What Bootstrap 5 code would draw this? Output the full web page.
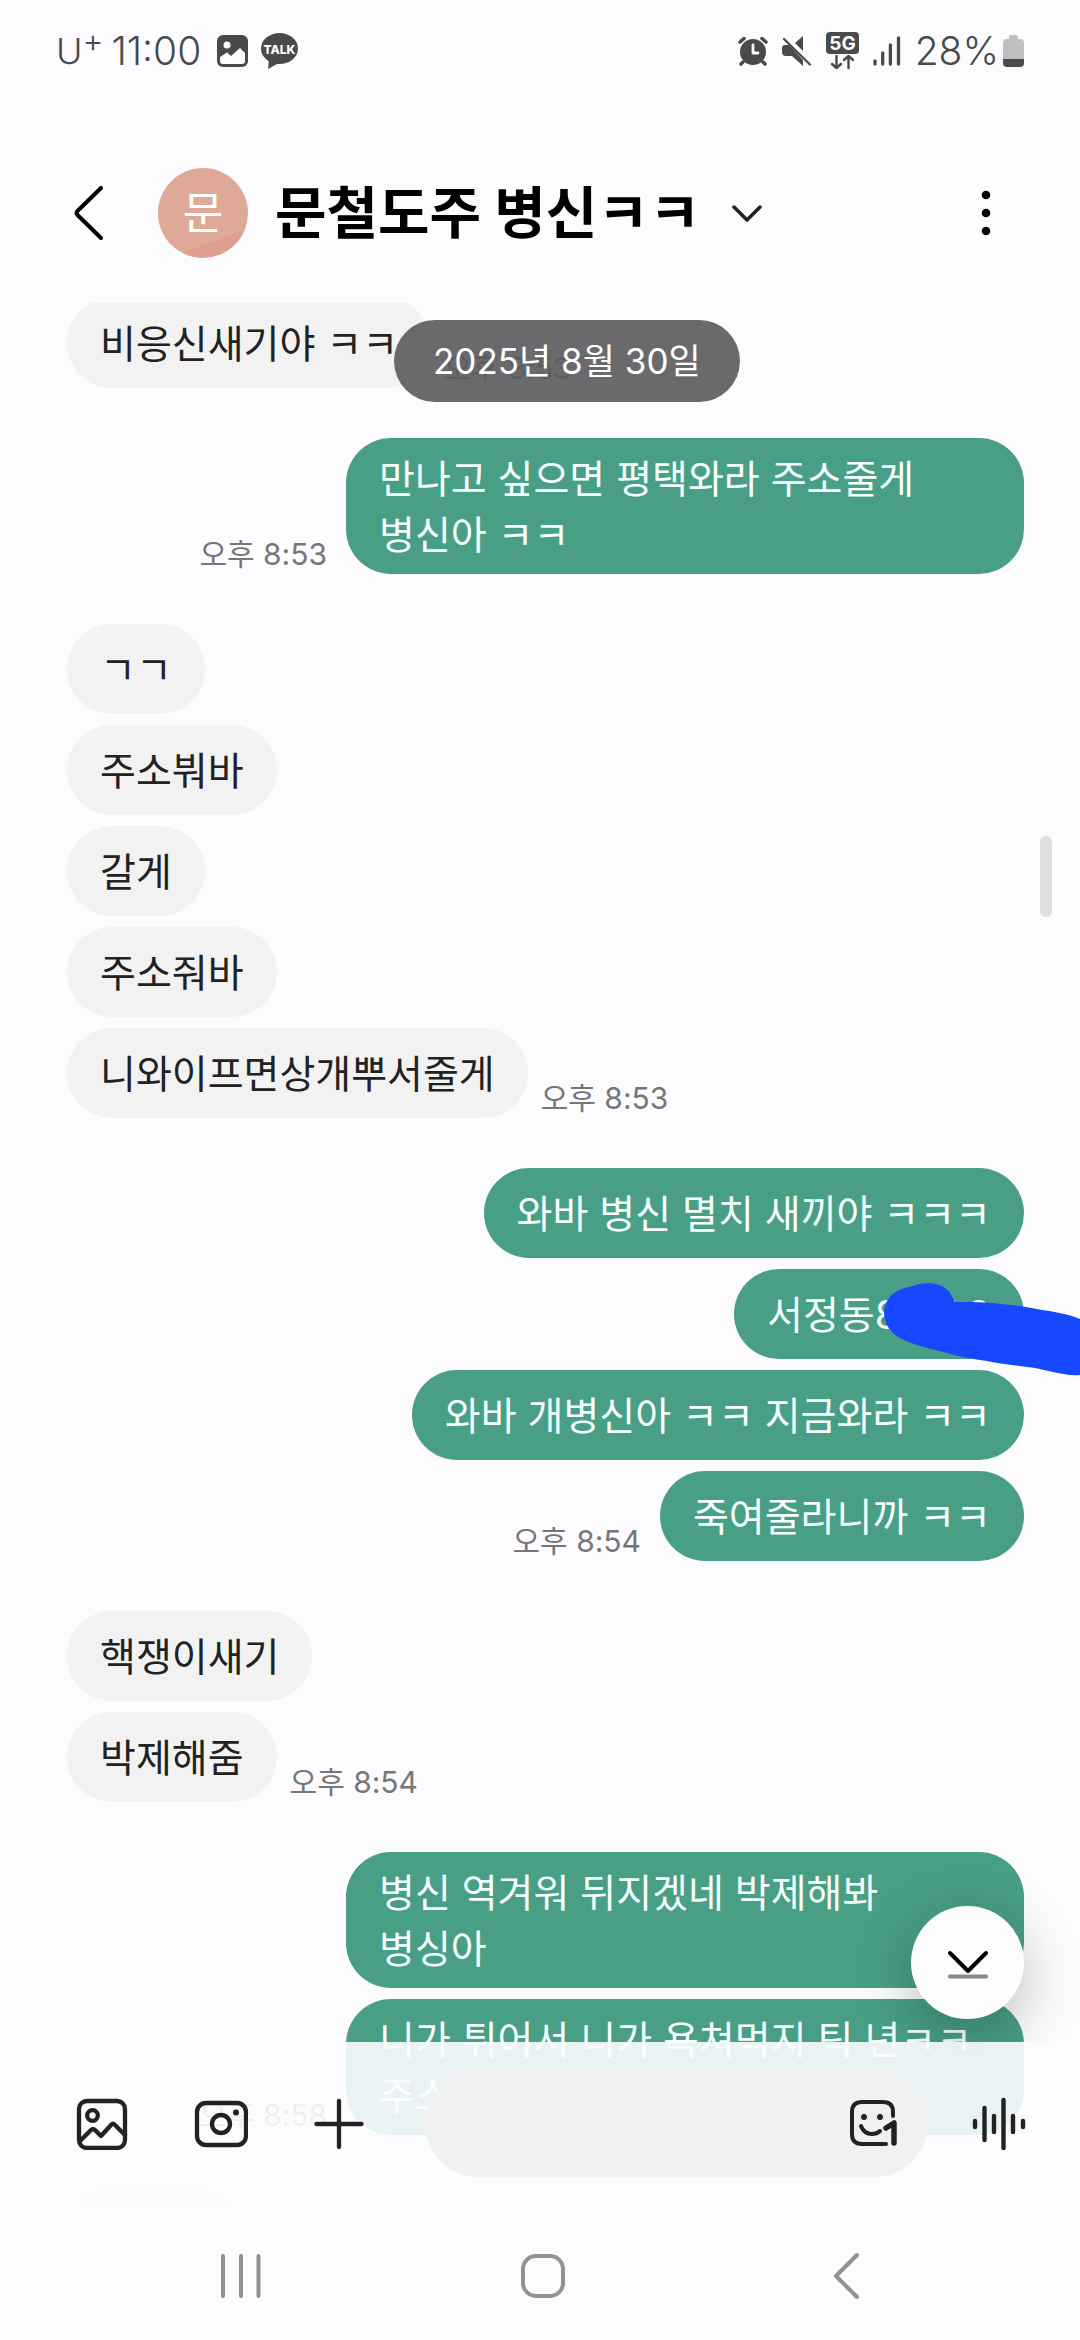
<!DOCTYPE html>
<html lang="ko">
<head>
<meta charset="utf-8">
<meta name="viewport" content="width=device-width, initial-scale=1">
<title>메시지</title>
<link href="https://cdn.jsdelivr.net/npm/bootstrap@5.3.0/dist/css/bootstrap.min.css" rel="stylesheet">
<style>
  :root { --page: #fcfcff; --mine: #489f86; --theirs: #f2f2f2; --ink: #222; --status: #4a4a4a; --soft: #767676; }
  body { font-family: Inter, "Noto Sans CJK KR", sans-serif; background: var(--page); color: var(--ink); }
  .app-shell { height: 100vh; min-height: 900px; }
  svg { display: block; flex: none; fill: none; stroke-linecap: round; stroke-linejoin: round; }
  .btn { --bs-btn-padding-x: 0; --bs-btn-padding-y: 0; --bs-btn-border-width: 0; }

  .status-bar { height: 102px; padding: 0 56px; color: var(--status); font-size: 39px; font-weight: 300; line-height: 56px; }
  .carrier { font-size: 36px; }
  .carrier sup { font-size: 32px; top: -12px; line-height: 0; }
  .status-right { gap: 14px; }

  .chat-header { height: 201px; padding: 20px 87px 0 74px; }
  .avatar { width: 90px; height: 90px; font-size: 44px; color: #fff; margin-left: 55px; background: linear-gradient(160deg, #dfa998 0 76%, #df9f90 76%); }
  .chat-title { font-size: 56px; font-weight: 700; line-height: 72px; color: #000; margin-left: 27px; }
  .title-toggle { margin-left: 32px; }

  .chat-view { min-height: 0; }
  .message-list { padding: 0 56px 0 67px; gap: 50px; margin-top: -5px; }
  .message-group { gap: 11px; }
  .bubble { min-height: 90px; padding: 13px 33px 11px; border-radius: 45px; font-size: 39px; line-height: 56px; }
  .bubble-in { background: var(--theirs); }
  .bubble-out { background: var(--mine); color: #f5fffd; }
  .bubble-wide { width: 678px; }
  .bubble-next { width: 172px; }
  .sent-time { font-size: 30px; line-height: 40px; color: var(--soft); white-space: nowrap; }
  .time-in { margin-left: 13px; }
  .time-out { margin-right: 19px; }
  .covered { width: 68px; }

  .date-pill { top: 17px; left: 394px; padding: 13px 39px; border-radius: 41px; background: rgba(90, 90, 92, .9); color: #fff; font-size: 35px; line-height: 56px; white-space: nowrap; }
  .scroll-thumb { top: 533px; right: 28px; width: 12px; height: 81px; border-radius: 6px; background: #dedee0; }
  .marker-stroke { top: 975px; right: 0; }
  .jump-latest { right: 56px; bottom: 186px; width: 113px; height: 113px; background: #fdfdfd; box-shadow: 0 16px 60px rgba(0, 0, 0, .26); }
  .jump-latest:hover { background: #fff; }

  .composer { height: 163px; padding: 0 54px 0 76px; background: rgba(252, 252, 255, .9); }
  .composer-tools { gap: 66px; margin-right: 61px; }
  .composer-box { height: 107px; border-radius: 54px; background: #f1f1f1; margin-right: 44px; padding: 0 29px 0 40px; }
  .composer-box input { background: transparent; font-size: 39px; box-shadow: none; }
  .system-nav { height: 135px; padding: 6px 190px 0 200px; }
</style>
<script src="https://cdn.jsdelivr.net/npm/bootstrap@5.3.0/dist/js/bootstrap.bundle.min.js"></script>
</head>
<body>
<div class="app-shell d-flex flex-column overflow-hidden">

  <div class="status-bar d-flex align-items-center justify-content-between flex-shrink-0">
    <div class="d-flex align-items-center">
      <span class="carrier">U<sup>+</sup></span>
      <span class="ms-2">11:00</span>
      <svg class="ms-3" width="31" height="32" viewBox="0 0 31 32"><rect width="31" height="32" rx="6" fill="#4a4a4a"/><circle cx="10" cy="10" r="3.500" fill="#fcfcff"/><path d="M3 22L10 17.500L14 21L23 13L28 18V26Q28 29 25 29H6Q3 29 3 26Z" fill="#fcfcff"/></svg>
      <svg class="ms-2 ps-1" width="42" height="36" viewBox="-1 0 38 36"><ellipse cx="18.500" cy="15.500" rx="18.500" ry="15.500" fill="#4a4a4a"/><path d="M8 26L7 36L18 30Z" fill="#4a4a4a"/><text x="18.500" y="20.500" text-anchor="middle" font-family="Inter" font-size="12" font-weight="800" fill="#fcfcff">TALK</text></svg>
    </div>
    <div class="status-right d-flex align-items-center">
      <svg width="30" height="30" viewBox="0 0 30 30"><circle cx="15" cy="16" r="13" fill="#4a4a4a"/><path d="M2 6L6 2.500M28 6L24 2.500M5 26L3 28M25 26L27 28" stroke="#4a4a4a" stroke-width="3.500"/><path d="M15 9V17H20" stroke="#fcfcff" stroke-width="2.800"/></svg>
      <svg width="30" height="30" viewBox="0 0 30 30"><path d="M0 12Q0 9 3 9H7L21 24V30L10 20H4Q0 20 0 16ZM13 7L21 0V15Z" fill="#4a4a4a"/><path d="M2 3L28 28.500" stroke="#4a4a4a" stroke-width="2.200"/></svg>
      <svg width="33" height="38" viewBox="0 0 33 38"><rect width="33" height="22" rx="4" fill="#4a4a4a"/><text x="16.500" y="18" text-anchor="middle" font-family="Inter" font-size="19" font-weight="700" fill="#fcfcff">5G</text><path d="M10.500 24V36M6 32L10.500 36L15 32M22.500 36V24M18 28L22.500 24L27 28" stroke="#4a4a4a" stroke-width="2.400"/></svg>
      <svg width="28" height="30" viewBox="0 0 28 30"><path d="M2 25V28M9.700 17V28M17.400 9V28M25.500 2V28" stroke="#4a4a4a" stroke-width="3.300"/></svg>
      <span class="d-flex align-items-center gap-1">28%
        <svg width="21" height="32" viewBox="0 0 21 32"><path d="M6 4V2Q6 0 8 0H13Q15 0 15 2V4H17Q21 4 21 8V25H0V8Q0 4 4 4Z" fill="#bfbfc1"/><path d="M0 24H21V28Q21 32 17 32H4Q0 32 0 28Z" fill="#4a4a4a"/></svg>
      </span>
    </div>
  </div>

  <header class="chat-header d-flex align-items-center flex-shrink-0">
    <button class="btn" type="button" aria-label="뒤로"><svg width="29" height="54" viewBox="0 0 29 54" stroke="#000" stroke-width="4"><path d="M27 2L3.500 25Q1.500 27 3.500 29L27 52"/></svg></button>
    <div class="avatar rounded-circle d-flex align-items-center justify-content-center">문</div>
    <h1 class="chat-title mb-0">문철도주 병신ㅋㅋ</h1>
    <button class="btn title-toggle" type="button" aria-label="대화 정보"><svg width="30" height="18" viewBox="0 0 30 18" stroke="#222" stroke-width="3.500"><path d="M2 3L15 16L28 3"/></svg></button>
    <button class="btn ms-auto" type="button" aria-label="더보기"><svg width="14" height="46" viewBox="0 0 14 46"><g fill="#000"><circle cx="7" cy="5" r="4.300"/><circle cx="7" cy="23" r="4.300"/><circle cx="7" cy="41" r="4.300"/></g></svg></button>
  </header>

  <main class="chat-view position-relative flex-grow-1 overflow-hidden">
    <div class="message-list d-flex flex-column">
      <section class="message-group d-flex flex-column align-items-start">
        <div class="d-flex align-items-end"><div class="bubble bubble-in d-flex align-items-center">비응신새기야 ㅋㅋ</div><time class="sent-time time-in">오후 8:53</time></div>
      </section>
      <section class="message-group d-flex flex-column align-items-end">
        <div class="d-flex align-items-end"><time class="sent-time time-out">오후 8:53</time><div class="bubble bubble-out bubble-wide">만나고 싶으면 평택와라 주소줄게<br>병신아 ㅋㅋ</div></div>
      </section>
      <section class="message-group d-flex flex-column align-items-start">
        <div class="bubble bubble-in d-flex align-items-center">ㄱㄱ</div>
        <div class="bubble bubble-in d-flex align-items-center">주소붜바</div>
        <div class="bubble bubble-in d-flex align-items-center">갈게</div>
        <div class="bubble bubble-in d-flex align-items-center">주소줘바</div>
        <div class="d-flex align-items-end"><div class="bubble bubble-in d-flex align-items-center">니와이프면상개뿌서줄게</div><time class="sent-time time-in">오후 8:53</time></div>
      </section>
      <section class="message-group d-flex flex-column align-items-end">
        <div class="bubble bubble-out d-flex align-items-center">와바 병신 멸치 새끼야 ㅋㅋㅋ</div>
        <div class="bubble bubble-out d-flex align-items-center">서정동8<span class="covered"></span>8</div>
        <div class="bubble bubble-out d-flex align-items-center">와바 개병신아 ㅋㅋ 지금와라 ㅋㅋ</div>
        <div class="d-flex align-items-end"><time class="sent-time time-out">오후 8:54</time><div class="bubble bubble-out d-flex align-items-center">죽여줄라니까 ㅋㅋ</div></div>
      </section>
      <section class="message-group d-flex flex-column align-items-start">
        <div class="bubble bubble-in d-flex align-items-center">핵쟁이새기</div>
        <div class="d-flex align-items-end"><div class="bubble bubble-in d-flex align-items-center">박제해줌</div><time class="sent-time time-in">오후 8:54</time></div>
      </section>
      <section class="message-group d-flex flex-column align-items-end">
        <div class="bubble bubble-out bubble-wide">병신 역겨워 뒤지겠네 박제해봐<br>병싱아</div>
        <div class="d-flex align-items-end"><time class="sent-time time-out">오후 8:58</time><div class="bubble bubble-out bubble-wide">니가 튀어서 니가 욕쳐먹지 틱 년ㅋㅋ<br>주소</div></div>
      </section>
      <section class="message-group d-flex flex-column align-items-start">
        <div class="bubble bubble-in bubble-next"></div>
      </section>
    </div>

    <div class="date-pill position-absolute">2025년 8월 30일</div>
    <div class="scroll-thumb position-absolute"></div>
    <svg class="marker-stroke position-absolute" width="200" height="104" viewBox="880 1278 200 104"><path fill="#1648ff" d="M884 1312C885 1299 893 1291 905 1288C914 1286 919 1283 930 1283C944 1284 952 1292 954 1302C972 1302 985 1302 1000 1304C1015 1305 1028 1307 1042 1310C1056 1312 1068 1314 1080 1319V1375Q1072 1376 1064 1374C1050 1372 1040 1368 1027 1367C1013 1365 1000 1364 987 1361C973 1359 960 1357 947 1353C932 1349 918 1346 906 1341C892 1335 884 1326 884 1312Z"/></svg>

    <button class="btn jump-latest position-absolute rounded-circle d-flex align-items-center justify-content-center" type="button" aria-label="최신 메시지로 이동"><svg class="mt-1" width="42" height="30" viewBox="0 0 42 30" stroke-width="4"><path stroke="#000" d="M3 3L21 21L39 3"/><path stroke="#888" d="M3 26.500H39"/></svg></button>

    <form class="composer position-absolute bottom-0 start-0 end-0 d-flex align-items-center">
      <div class="composer-tools d-flex align-items-center">
        <button class="btn" type="button" aria-label="갤러리"><svg width="52" height="52" viewBox="0 0 52 52" stroke="#222" stroke-width="4.300"><rect x="3" y="3" width="46" height="47" rx="8"/><circle cx="16.500" cy="17.500" r="5.300"/><path d="M4 43L15 32Q17 30.500 19 32L25 38L35 27Q37 24.500 39 27L49 37"/></svg></button>
        <button class="btn" type="button" aria-label="카메라"><svg width="54" height="52" viewBox="0 0 54 52" stroke="#222" stroke-width="4.300"><rect x="3" y="5" width="49" height="42" rx="9"/><circle cx="27" cy="26" r="9"/><circle cx="42" cy="14.500" r="3" fill="#222" stroke="none"/></svg></button>
        <button class="btn" type="button" aria-label="추가"><svg width="50" height="52" viewBox="0 0 50 52" stroke="#222" stroke-width="4.300"><path d="M25 3V49M2.500 26H47.500"/></svg></button>
      </div>
      <div class="composer-box flex-grow-1 d-flex align-items-center">
        <input class="form-control border-0 p-0" type="text" aria-label="메시지 입력">
        <button class="btn" type="button" aria-label="이모티콘"><svg width="50" height="50" viewBox="0 0 50 50" stroke="#222" stroke-width="4"><path d="M37 45H13Q3 45 3 35V13Q3 3 13 3H34Q44 3 44 13V17"/><path d="M12 27Q15 35 23 35Q28 35 31 32"/><g fill="#222" stroke="none"><circle cx="15" cy="18" r="3"/><circle cx="31" cy="18" r="3"/></g><path stroke-width="5.500" d="M37 29L45 24V44"/></svg></button>
      </div>
      <button class="btn" type="button" aria-label="음성 입력"><svg width="54" height="54" viewBox="0 0 54 54" stroke="#222" stroke-width="4.400"><path d="M3 24V30M12.500 11V43M22 19V35M31.500 3V51M41 19V35M51 24V30"/></svg></button>
    </form>
  </main>

  <nav class="system-nav d-flex align-items-center justify-content-between flex-shrink-0">
    <button class="btn" type="button" aria-label="최근 앱"><svg width="80" height="46" viewBox="0 0 80 46" stroke="#929295" stroke-width="4"><path d="M23 3V43M41 3V43M58.500 3V43"/></svg></button>
    <button class="btn" type="button" aria-label="홈"><svg width="50" height="46" viewBox="0 0 50 46" stroke="#929295" stroke-width="4"><rect x="3" y="3" width="40" height="40" rx="13"/></svg></button>
    <button class="btn" type="button" aria-label="뒤로 가기"><svg width="80" height="46" viewBox="0 0 80 46" stroke="#929295" stroke-width="4"><path d="M47 2L26 23L47 44"/></svg></button>
  </nav>
</div>
</body>
</html>
